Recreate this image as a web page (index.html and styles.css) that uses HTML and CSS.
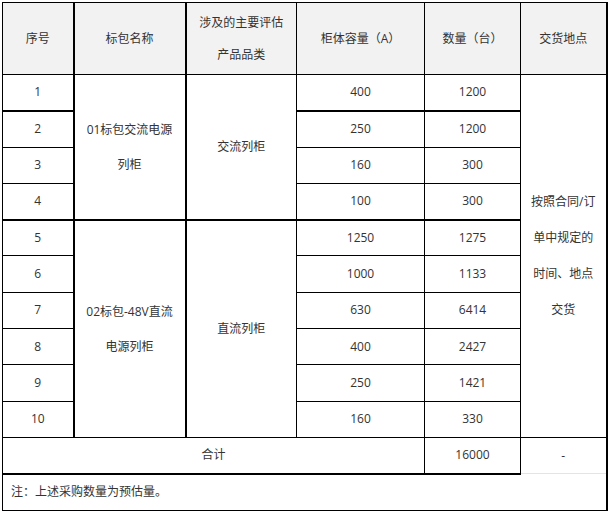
FILE: index.html
```html
<!DOCTYPE html>
<html lang="zh">
<head>
<meta charset="utf-8">
<title>采购清单</title>
<link rel="stylesheet" href="styles.css">
</head>
<body>
<table class="spec">
  <colgroup>
    <col class="w1"><col class="w2"><col class="w3"><col class="w4"><col class="w5"><col class="w6">
  </colgroup>
  <thead>
    <tr class="head">
      <th class="tk-r">序号</th>
      <th class="tk-r">标包名称</th>
      <th>涉及的主要评估<br>产品品类</th>
      <th>柜体容量（A）</th>
      <th>数量（台）</th>
      <th class="tk-rr">交货地点</th>
    </tr>
  </thead>
  <tbody>
    <tr>
      <td class="tk-r tk-b">1</td>
      <td class="tk-r tk-b span" rowspan="4">01标包交流电源<br>列柜</td>
      <td class="tk-b span" rowspan="4">交流列柜</td>
      <td class="tk-b">400</td>
      <td class="tk-b">1200</td>
      <td class="tk-rr place" rowspan="10">按照合同/订<br>单中规定的<br>时间、地点<br>交货</td>
    </tr>
    <tr><td class="tk-r">2</td><td>250</td><td>1200</td></tr>
    <tr><td class="tk-r">3</td><td>160</td><td>300</td></tr>
    <tr><td class="tk-r tk-b">4</td><td class="tk-b">100</td><td class="tk-b">300</td></tr>
    <tr>
      <td class="tk-r">5</td>
      <td class="tk-r span" rowspan="6">02标包-48V直流<br>电源列柜</td>
      <td class="span" rowspan="6">直流列柜</td>
      <td>1250</td>
      <td>1275</td>
    </tr>
    <tr><td class="tk-r">6</td><td>1000</td><td>1133</td></tr>
    <tr><td class="tk-r">7</td><td>630</td><td>6414</td></tr>
    <tr><td class="tk-r">8</td><td>400</td><td>2427</td></tr>
    <tr><td class="tk-r">9</td><td>250</td><td>1421</td></tr>
    <tr><td class="tk-r">10</td><td>160</td><td>330</td></tr>
    <tr>
      <td class="tk-b" colspan="4">合计</td>
      <td class="tk-b">16000</td>
      <td class="tk-rr soft-b">-</td>
    </tr>
    <tr class="note-row">
      <td class="note tk-rr" colspan="6">注：上述采购数量为预估量。</td>
    </tr>
  </tbody>
</table>
</body>
</html>
```

FILE: styles.css
```css
html, body {
  margin: 0;
  padding: 0;
  background: #ffffff;
}

body {
  padding: 2px 0 0 2px;
  font-family: "Open Sans", "Noto Sans CJK SC", sans-serif;
  font-size: 12px;
  color: #333333;
}

.spec {
  border-collapse: collapse;
  table-layout: fixed;
  width: 604px;
}

.w1 { width: 71px; }
.w2 { width: 112px; }
.w3 { width: 111px; }
.w4 { width: 128px; }
.w5 { width: 96px; }
.w6 { width: 86px; }

.spec th,
.spec td {
  border: 1px solid #000000;
  text-align: center;
  vertical-align: middle;
  padding: 0 4px;
  line-height: 20px;
  height: 35px;
  box-sizing: border-box;
  font-weight: normal;
  overflow: hidden;
  white-space: nowrap;
}

.spec .head th {
  background: #f2f2f2;
  height: 72px;
  line-height: 32px;
}

.spec tbody tr {
  height: 36.3px;
}

.spec .span {
  line-height: 35px;
}

.spec .place {
  line-height: 36px;
}

.spec .tk-r { border-right-width: 2px; }
.spec .tk-rr { border-right-width: 2px; }
.spec .tk-b { border-bottom-width: 2px; }
.spec .soft-b { border-bottom: 1px solid #e4e4e4; }

.spec .note {
  text-align: left;
  padding-left: 8px;
  height: 36px;
}
```
